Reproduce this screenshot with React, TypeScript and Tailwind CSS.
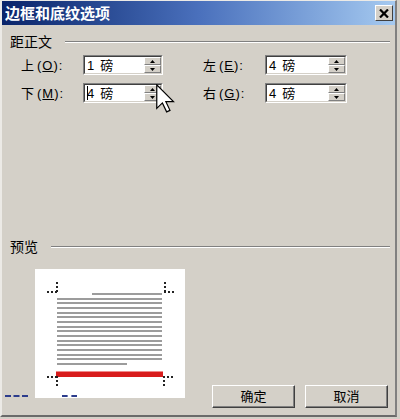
import React from 'react';

const FONT = "font-['Liberation_Sans','Noto_Sans_CJK_SC',sans-serif]";

function SpinHalf({ up }: { up?: boolean }) {
  return (
    <div className="flex-1 flex items-center justify-center bg-[#d4d0c8] border border-t-white border-l-white border-b-[#808080] border-r-[#808080]">
      <svg width="5" height="3" viewBox="0 0 5 3">
        {up ? <polygon points="2.5,0 5,3 0,3" fill="#000" /> : <polygon points="0,0 5,0 2.5,3" fill="#000" />}
      </svg>
    </div>
  );
}

function NumberField({ value, width, caret }: { value: string; width: string; caret?: boolean }) {
  return (
    <div className={`${width} h-[20px] border border-t-[#808080] border-l-[#808080] border-b-white border-r-white`}>
      <div className="h-full flex border border-t-[#404040] border-l-[#404040] border-b-[#d4d0c8] border-r-[#d4d0c8] bg-white">
        <div className="flex-1 flex items-center pl-[2px] text-[13px] leading-none text-black">
          {caret && <span className="w-px h-[14px] bg-black -mr-[1px]" />}
          <span>{value}</span>
          <span className="ml-[6px]">磅</span>
        </div>
        <div className="w-[17px] flex flex-col">
          <SpinHalf up />
          <SpinHalf />
        </div>
      </div>
    </div>
  );
}

function FieldLabel({ main, keyChar }: { main: string; keyChar: string }) {
  return (
    <div className="w-[62px] text-[13px] leading-none text-black flex items-center">
      <span>{main}</span>
      <span className="ml-[3px] tracking-[1px]">
        (<span className="underline">{keyChar}</span>):
      </span>
    </div>
  );
}

function GroupHeader({ label }: { label: string }) {
  return (
    <div className="flex items-center h-[16px]">
      <span className="text-[14px] leading-none text-black">{label}</span>
      <div className="flex-1 ml-[13px] mr-[5px] border-t border-t-[#808080] border-b border-b-white" />
    </div>
  );
}

function DialogButton({ label }: { label: string }) {
  return (
    <button className="w-[83px] h-[23px] bg-[#d4d0c8] border border-t-white border-l-white border-b-[#404040] border-r-[#404040] shadow-[inset_-1px_-1px_0_#808080] text-[13px] leading-none text-black flex items-center justify-center">
      {label}
    </button>
  );
}

const LINES = Array.from({ length: 14 }, (_, i) => i);

function Preview() {
  return (
    <div className="relative w-[150px] h-[129px] bg-white ml-[25px]">
      {/* corner marks */}
      <div className="absolute left-[21px] top-[13px] h-[10px] border-l-2 border-dotted border-l-[#222]" />
      <div className="absolute left-[12px] top-[22px] w-[10px] border-t-2 border-dotted border-t-[#222]" />
      <div className="absolute left-[129px] top-[13px] h-[10px] border-l-2 border-dotted border-l-[#222]" />
      <div className="absolute left-[129px] top-[22px] w-[10px] border-t-2 border-dotted border-t-[#222]" />
      <div className="absolute left-[12px] top-[107px] w-[10px] border-t-2 border-dotted border-t-[#222]" />
      <div className="absolute left-[21px] top-[107px] h-[10px] border-l-2 border-dotted border-l-[#222]" />
      <div className="absolute left-[128px] top-[107px] w-[10px] border-t-2 border-dotted border-t-[#222]" />
      <div className="absolute left-[128px] top-[107px] h-[10px] border-l-2 border-dotted border-l-[#222]" />

      <div className="pt-[24px] pl-[22px] flex flex-col gap-[2.67px]">
        <div className="ml-[35px] w-[70px] h-[2px] bg-[#9c9c9c]" />
        {LINES.map(i => (
          <div key={i} className="w-[105px] h-[2px] bg-[#9c9c9c]" />
        ))}
        <div className="w-[70px] h-[2px] bg-[#9c9c9c]" />
      </div>
      <div className="ml-[21px] mt-[6px] w-[107px] h-[6px] bg-[#d81c1c] border-t border-t-[#f08a8a]" />
    </div>
  );
}

export default function App() {
  return (
    <div className={`w-[400px] h-[419px] bg-[#d4d0c8] relative overflow-hidden ${FONT}`}>
      <div className="w-[397px] h-[417px] flex flex-col border-t border-t-[#eceae6] border-l-2 border-l-[#eceae6] border-r-2 border-r-[#808080] border-b-2 border-b-[#6a6a6a]">
        {/* Title bar */}
        <div className="h-[24px] shrink-0 flex items-center justify-between pl-[3px] pr-[2px] bg-linear-to-r from-[#0a246a] via-[#4a70bc] to-[#a6caf0]">
          <span className="text-[15px] font-bold leading-none text-white">边框和底纹选项</span>
          <div className="w-[18px] h-[16px] bg-[#d4d0c8] border border-t-white border-l-white border-b-[#404040] border-r-[#404040] flex items-center justify-center">
            <svg width="10" height="9" viewBox="0 0 10 9">
              <path d="M1 0.5 L9 8.5 M9 0.5 L1 8.5" stroke="#000" strokeWidth="2.2" />
            </svg>
          </div>
        </div>

        {/* Body */}
        <div className="pl-[8px] flex flex-col">
          <div className="mt-[9px]">
            <GroupHeader label="距正文" />
          </div>

          <div className="ml-[11px] mt-[5px] flex flex-col gap-[8px]">
            <div className="flex items-center">
              <FieldLabel main="上" keyChar="O" />
              <NumberField value="1" width="w-[80px]" />
              <div className="ml-[40px]">
                <FieldLabel main="左" keyChar="E" />
              </div>
              <NumberField value="4" width="w-[82px]" />
            </div>
            <div className="flex items-center">
              <FieldLabel main="下" keyChar="M" />
              <NumberField value="4" width="w-[80px]" caret />
              <div className="ml-[40px]">
                <FieldLabel main="右" keyChar="G" />
              </div>
              <NumberField value="4" width="w-[82px]" />
            </div>
          </div>

          <div className="mt-[136px]">
            <GroupHeader label="预览" />
          </div>

          <div className="mt-[14px] h-[139px] flex items-start">
            <Preview />
            <div className="self-end ml-[27px] flex gap-[10px]">
              <DialogButton label="确定" />
              <DialogButton label="取消" />
            </div>
          </div>
        </div>
      </div>

      {/* stray dashes at the bottom edge */}
      <div className="absolute left-[5px] top-[395px] w-[23px] border-t-2 border-dashed border-t-[#2c3c8c]" />
      <div className="absolute left-[62px] top-[395px] w-[15px] border-t-2 border-dashed border-t-[#2c3c8c]" />

      {/* mouse pointer */}
      <svg className="absolute left-[156px] top-[84px]" width="19" height="29" viewBox="0 0 12.5 19">
        <path d="M0.5 0.5 L0.5 16 L4.2 12.4 L7 18.3 L9.2 17.3 L6.5 11.6 L11.5 11.6 Z" fill="#fff" stroke="#000" strokeWidth="0.8" strokeLinejoin="miter" />
      </svg>
    </div>
  );
}
